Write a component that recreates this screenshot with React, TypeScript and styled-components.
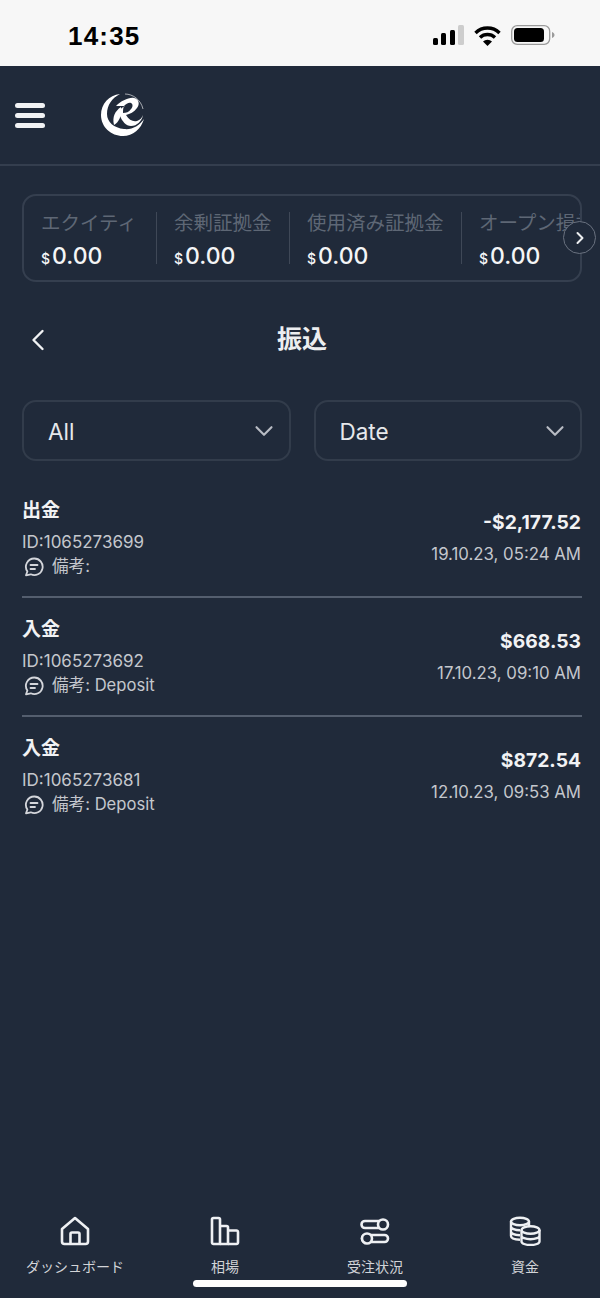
import React from "react";
import styled, { createGlobalStyle } from "styled-components";
import { ChevronDown, ChevronLeft, ChevronRight } from "lucide-react";

const SANS = `Inter, "Noto Sans CJK JP", sans-serif`;

const GlobalStyle = createGlobalStyle`
  html, body { margin: 0; padding: 0; background: #202a3a; }
  * { box-sizing: border-box; }
`;

const balances = [
  { label: "エクイティ", width: 132 },
  { label: "余剰証拠金", width: 133 },
  { label: "使用済み証拠金", width: 172 },
  { label: "オープン損益", width: 130 },
];

const transfers = [
  { title: "出金", id: "1065273699", note: "備考:", amount: "-$2,177.52", date: "19.10.23, 05:24 AM" },
  { title: "入金", id: "1065273692", note: "備考: Deposit", amount: "$668.53", date: "17.10.23, 09:10 AM" },
  { title: "入金", id: "1065273681", note: "備考: Deposit", amount: "$872.54", date: "12.10.23, 09:53 AM" },
];

const HomeIcon = () => (
  <svg width="30" height="30" viewBox="0 0 30 30" fill="none" stroke="#eef0f3" strokeWidth="2.6" strokeLinejoin="round">
    <path d="M2 13 15 2l13 11v12.500a2.500 2.500 0 0 1-2.500 2.500h-21A2.500 2.500 0 0 1 2 25.500Z" />
    <path d="M10.500 28V18a1.500 1.500 0 0 1 1.500-1.500h6a1.500 1.500 0 0 1 1.500 1.500v10" />
  </svg>
);

const BarsIcon = () => (
  <svg width="30" height="30" viewBox="0 0 30 30" fill="none" stroke="#eef0f3" strokeWidth="2.6" strokeLinejoin="round">
    <path d="M2 3.500A1.500 1.500 0 0 1 3.500 2h5A1.500 1.500 0 0 1 10 3.500V28H3.500A1.500 1.500 0 0 1 2 26.500Z" />
    <path d="M10 10h6.500a1.500 1.500 0 0 1 1.500 1.500V28h-8" />
    <path d="M18 14.500h8.500a1.500 1.500 0 0 1 1.500 1.500v10.500a1.500 1.500 0 0 1-1.500 1.500H18" />
  </svg>
);

const TogglesIcon = () => (
  <svg width="30" height="30" viewBox="0 0 30 30" fill="none" stroke="#eef0f3" strokeWidth="2.600">
    <rect x="1.500" y="5" width="26" height="7" rx="3.500" />
    <circle cx="23" cy="8.500" r="5" fill="#202a3a" />
    <rect x="2" y="19" width="26" height="7" rx="3.500" />
    <circle cx="7" cy="22.500" r="5" fill="#202a3a" />
  </svg>
);

const CoinsIcon = () => (
  <svg width="32" height="30" viewBox="0 0 32 30" fill="none" stroke="#eef0f3" strokeWidth="2.400">
    <ellipse cx="11" cy="5.500" rx="9" ry="3.800" />
    <path d="M2 5.500v14.500c0 2 3 3.500 9 3.700M20 5.500V11M2 10.500c0 2 4 3.700 9 3.700M2 15.500c0 2 4 3.500 9 3.700" />
    <ellipse cx="21.500" cy="14" rx="9" ry="3.800" />
    <path d="M12.500 14v11.500c0 2 4 3.500 9 3.500s9-1.500 9-3.500V14M12.500 19.700c0 2 4 3.500 9 3.500s9-1.500 9-3.500" />
  </svg>
);

const NoteIcon = () => (
  <svg width="20" height="20" viewBox="0 0 20 20" fill="none" stroke="#d4d6db" strokeWidth="1.800" strokeLinecap="round" strokeLinejoin="round">
    <path d="M10.300 1.500a8.300 8.300 0 1 1-3.500 15.800l-4.800 1 1.400-3.800a8.300 8.300 0 0 1 6.900-13Z" />
    <path d="M6.500 8h7M6.500 12h4.500" />
  </svg>
);

const Logo = () => (
  <svg width="46" height="46" viewBox="0 0 46 46" fill="#fff">
    <path d="M20 2C9 3 1 12 1 23c0 12 10 21 22 21 10 0 18-7 21-17-5 7-12 11-20 10C14 36 7 30 7 22 7 13 12 6 20 2Z" />
    <path d="M25 2c8 0 16 6 18 15" fill="none" stroke="#fff" strokeWidth="1" opacity="0.6" />
    <path
      d="M16 14C21 9 29 5 34 6c5 1 6 6 3 10-3 4-7 6-11 7 3 5 7 7 11 6 3-1 5-3 6-6-1 6-6 11-12 11-5 0-9-5-11-10l-1-1c0-5 3-8 6-9ZM24 14c-1 2-1 5-1 7 3 0 6-1 8-4 2-2 2-5 0-6-2-1-5 1-7 3Z"
      fillRule="evenodd"
    />
    <path d="M21 15c-6 4-9 10-7 18 5-3 8-9 7-18Z" />
  </svg>
);

export default function App() {
  return (
    <Screen>
      <GlobalStyle />
      <StatusBar>
        <Clock>14:35</Clock>
        <StatusIcons>
          <svg width="31" height="20" viewBox="0 0 31 20">
            <rect x="0" y="13" width="5" height="7" rx="1.500" fill="#000" />
            <rect x="8" y="8" width="5" height="12" rx="1.500" fill="#000" />
            <rect x="17" y="5" width="5" height="15" rx="1.500" fill="#000" />
            <rect x="25" y="0" width="6" height="20" rx="1.500" fill="#cdcdcd" />
          </svg>
          <svg width="27" height="21" viewBox="0 0 27 21" fill="none" stroke="#000" strokeWidth="3.400">
            <path d="M1.500 8a17 17 0 0 1 24 0M6 12.500a11 11 0 0 1 15 0" />
            <path d="M13.500 21l-4.500-4.500a6.500 6.500 0 0 1 9 0Z" fill="#000" stroke="none" />
          </svg>
          <svg width="44" height="20" viewBox="0 0 44 20">
            <rect x="0.700" y="0.700" width="38" height="18.600" rx="5.500" fill="none" stroke="#9a9a9a" strokeWidth="1.300" />
            <rect x="3" y="3" width="30" height="14" rx="3.500" fill="#000" />
            <path d="M41 7c1.500.5 2.500 1.700 2.500 3s-1 2.500-2.500 3Z" fill="#9a9a9a" />
          </svg>
        </StatusIcons>
      </StatusBar>

      <TopBar>
        <Burger>
          <span />
          <span />
          <span />
        </Burger>
        <Logo />
      </TopBar>

      <BalanceWrap>
        <BalanceCard>
          {balances.map(b => (
            <BalanceCell key={b.label} $width={b.width}>
              <BalanceLabel>{b.label}</BalanceLabel>
              <BalanceValue>
                <small>$</small>0.00
              </BalanceValue>
            </BalanceCell>
          ))}
        </BalanceCard>
        <ScrollButton>
          <ChevronRight size={20} strokeWidth={2.4} />
        </ScrollButton>
      </BalanceWrap>

      <PageHeader>
        <BackButton>
          <ChevronLeft size={36} strokeWidth={1.600} />
        </BackButton>
        <PageTitle>振込</PageTitle>
      </PageHeader>

      <Filters>
        <FilterBox>
          All
          <ChevronDown size={30} strokeWidth={1.700} />
        </FilterBox>
        <FilterBox>
          Date
          <ChevronDown size={30} strokeWidth={1.700} />
        </FilterBox>
      </Filters>

      <List>
        {transfers.map(t => (
          <Row key={t.id}>
            <div>
              <RowTitle>{t.title}</RowTitle>
              <RowId>ID:{t.id}</RowId>
              <RowNote>
                <NoteIcon />
                {t.note}
              </RowNote>
            </div>
            <RowRight>
              <Amount>{t.amount}</Amount>
              <RowDate>{t.date}</RowDate>
            </RowRight>
          </Row>
        ))}
      </List>

      <TabBar>
        <Tab>
          <HomeIcon />
          <TabLabel>ダッシュボード</TabLabel>
        </Tab>
        <Tab>
          <BarsIcon />
          <TabLabel>相場</TabLabel>
        </Tab>
        <Tab>
          <TogglesIcon />
          <TabLabel>受注状況</TabLabel>
        </Tab>
        <Tab>
          <CoinsIcon />
          <TabLabel>資金</TabLabel>
        </Tab>
        <HomeIndicator />
      </TabBar>
    </Screen>
  );
}

const Screen = styled.div`
  position: relative;
  width: 600px;
  height: 1298px;
  overflow: hidden;
  background: #202a3a;
  font-family: ${SANS};
  color: #fff;
`;

const StatusBar = styled.div`
  height: 66px;
  background: #f7f7f7;
  display: flex;
  align-items: center;
  justify-content: space-between;
  padding: 4px 45px 0 68px;
`;

const Clock = styled.div`
  margin-top: 2px;
  font-family: "Liberation Sans", sans-serif;
  font-size: 26px;
  font-weight: 700;
  letter-spacing: 1.2px;
  color: #000;
`;

const StatusIcons = styled.div`
  display: flex;
  align-items: center;
  gap: 10px;
`;

const TopBar = styled.div`
  height: 100px;
  display: flex;
  align-items: center;
  gap: 55px;
  padding: 0 0 0 15px;
  border-bottom: 2px solid #343e4e;
`;

const Burger = styled.div`
  width: 30px;
  display: flex;
  flex-direction: column;
  gap: 5px;

  span {
    display: block;
    height: 5px;
    border-radius: 3px;
    background: #f1f2f4;
  }
`;

const BalanceWrap = styled.div`
  position: relative;
  margin: 28px 18px 0 22px;
`;

const BalanceCard = styled.div`
  height: 88px;
  display: flex;
  overflow: hidden;
  border: 2px solid #353f4f;
  border-radius: 14px;
  padding: 16px 0 0 0;
`;

const BalanceCell = styled.div<{ $width: number }>`
  flex: 0 0 ${p => p.$width}px;
  height: 52px;
  padding-left: 17px;
  border-left: 1px solid #3f4857;
  white-space: nowrap;

  &:first-child {
    border-left: none;
  }
`;

const BalanceLabel = styled.div`
  margin-top: -2px;
  font-size: 19.500px;
  line-height: 26px;
  color: #5e6775;
`;

const BalanceValue = styled.div`
  margin-top: 6px;
  font-size: 23px;
  line-height: 28px;
  font-weight: 500;
  color: #f4f5f6;

  small {
    font-size: 14px;
    margin-right: 2px;
  }
`;

const ScrollButton = styled.div`
  position: absolute;
  top: 27px;
  right: -14px;
  width: 33px;
  height: 33px;
  border-radius: 50%;
  display: flex;
  align-items: center;
  justify-content: center;
  background: #202a3a;
  border: 1.500px solid #6a7280;
  color: #eceef0;
`;

const PageHeader = styled.div`
  position: relative;
  height: 60px;
  margin-top: 28px;
  display: flex;
  align-items: center;
  justify-content: center;
`;

const BackButton = styled.div`
  position: absolute;
  left: 20px;
  top: 12px;
  display: flex;
  color: #f1f2f4;
`;

const PageTitle = styled.h1`
  margin: 0 0 2px 4px;
  font-size: 25px;
  line-height: 36px;
  font-weight: 700;
  color: #eceef0;
`;

const Filters = styled.div`
  display: flex;
  gap: 23px;
  margin: 30px 18px 0 22px;
`;

const FilterBox = styled.div`
  flex: 1;
  height: 61px;
  display: flex;
  align-items: center;
  justify-content: space-between;
  padding: 1px 10px 0 24px;
  border: 2px solid #323c4b;
  border-radius: 14px;
  font-size: 22.500px;
  color: #e6e8eb;

  svg {
    color: #b8bcc4;
  }
`;

const List = styled.div`
  margin: 18px 18px 0 22px;
`;

const Row = styled.div`
  height: 119px;
  display: flex;
  justify-content: space-between;
  padding-top: 19px;
  border-bottom: 2px solid #545e6e;

  &:last-child {
    border-bottom: none;
  }
`;

const RowTitle = styled.div`
  font-size: 19px;
  line-height: 26px;
  font-weight: 700;
  color: #f1f2f4;
`;

const RowId = styled.div`
  margin-top: 7px;
  font-size: 17px;
  line-height: 22px;
  color: #c4c7cd;
`;

const RowNote = styled.div`
  display: flex;
  align-items: center;
  gap: 8px;
  margin-top: 1px;
  font-size: 16.600px;
  line-height: 24px;
  color: #c4c7cd;

  svg {
    margin: 2px 0 0 2px;
  }
`;

const RowRight = styled.div`
  text-align: right;
  padding: 11px 1px 0 0;
`;

const Amount = styled.div`
  font-size: 19.300px;
  line-height: 26px;
  font-weight: 700;
  color: #f1f2f4;
`;

const RowDate = styled.div`
  margin-top: 7px;
  font-size: 16.800px;
  line-height: 24px;
  color: #c4c7cd;
`;

const TabBar = styled.div`
  position: absolute;
  left: 0;
  right: 0;
  bottom: 0;
  height: 104px;
  display: grid;
  grid-template-columns: repeat(4, 150px);
  padding-top: 22px;
`;

const Tab = styled.div`
  display: flex;
  flex-direction: column;
  align-items: center;
  gap: 11px;
`;

const TabLabel = styled.div`
  font-size: 14px;
  line-height: 20px;
  color: #d2d4d8;
  white-space: nowrap;
`;

const HomeIndicator = styled.div`
  position: absolute;
  left: 193px;
  bottom: 11px;
  width: 214px;
  height: 7px;
  border-radius: 4px;
  background: #fff;
`;
